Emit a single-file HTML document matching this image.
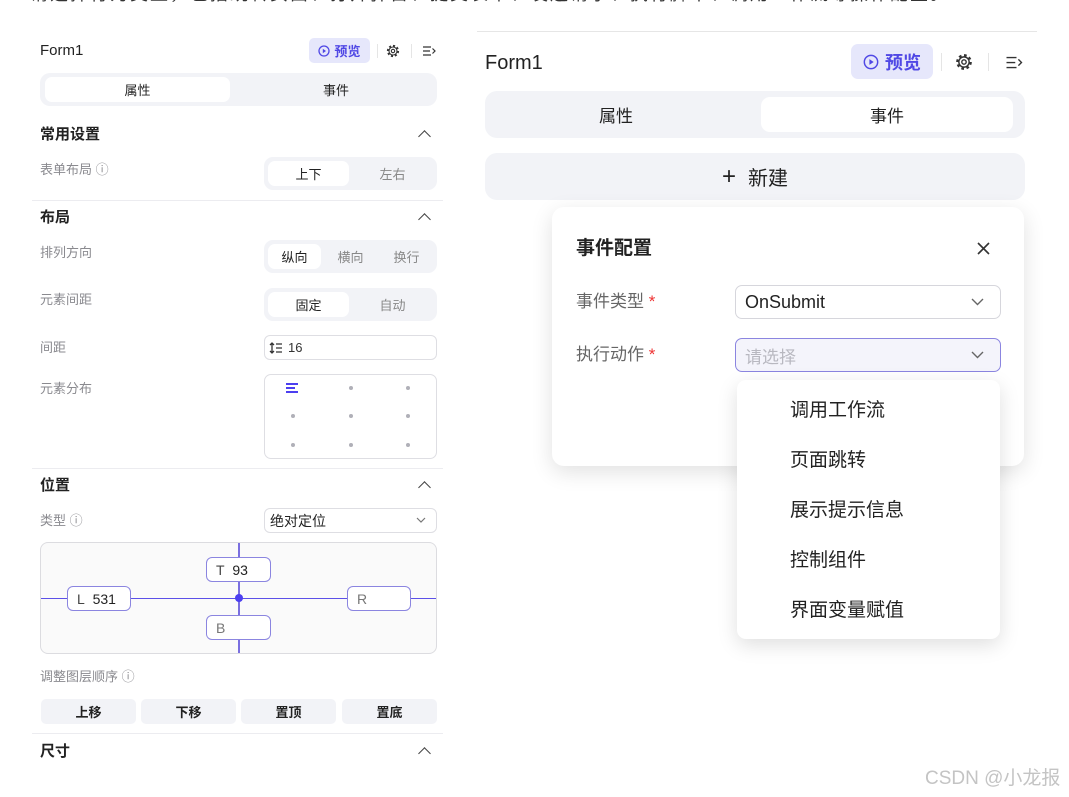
<!DOCTYPE html>
<html><head><meta charset="utf-8"><style>
*{margin:0;padding:0;box-sizing:border-box}
body{width:1069px;height:797px;background:#fff;position:relative;overflow:hidden;font-family:"Liberation Sans","Noto Sans CJK SC",sans-serif;color:#222}
.a{position:absolute}
.t{position:absolute;white-space:nowrap;line-height:1}
.lbl{color:#8a8a8f;font-size:13px}
.h{font-size:15px;font-weight:bold;color:#222}
.seg{position:absolute;background:#f2f3f7;border-radius:9px}
.on{position:absolute;background:#fff;border-radius:7px}
.ct{position:absolute;display:flex;align-items:center;justify-content:center}
.div{position:absolute;height:1px;background:#ececf0}
.chev{position:absolute;width:9px;height:9px;border-left:1.5px solid #444;border-top:1.5px solid #444;transform:rotate(45deg)}
.box{position:absolute;border:1px solid #8b85e0;border-radius:6px;background:#fff;font-size:14px;color:#444;padding-left:9px;display:flex;align-items:center}
.btn{position:absolute;background:#f2f3f7;border-radius:5px;font-size:13px;font-weight:bold;display:flex;align-items:center;justify-content:center;top:699px;height:25px}
.dot{position:absolute;width:4px;height:4px;border-radius:2px;background:#b0b0b8}
.mi{position:absolute;left:790px;font-size:19px;color:#222;white-space:nowrap;line-height:1}
</style></head><body>

<div class="t" style="left:30px;top:-15px;font-size:18px;color:#333;letter-spacing:2px">请选择行为类型，包括跳转页面、打开弹窗、提交表单、发送请求、执行脚本、调用工作流等操作配置。</div>

<!-- LEFT PANEL -->
<div class="t" style="left:40px;top:43px;font-size:15px;color:#222">Form1</div>
<div class="a" style="left:309px;top:38px;width:61px;height:25px;background:#e6e7fb;border-radius:5px;color:#5048e5;font-size:13px;font-weight:bold;display:flex;align-items:center;justify-content:center;gap:4px">
<svg width="12" height="12" viewBox="0 0 12 12"><circle cx="6" cy="6" r="5" fill="none" stroke="#5048e5" stroke-width="1.3"/><path d="M4.8 3.8L8 6L4.8 8.2Z" fill="#5048e5"/></svg>预览</div>
<div class="a" style="left:377px;top:44px;width:1px;height:14px;background:#e5e5e5"></div>
<svg class="a" style="left:386px;top:44px" width="14" height="14" viewBox="0 0 14 14"><circle cx="7" cy="7" r="5" fill="none" stroke="#333" stroke-width="2.2" stroke-dasharray="2 1.9"/><circle cx="7" cy="7" r="4" fill="#fff" stroke="#333" stroke-width="1.1"/><circle cx="7" cy="7" r="1.7" fill="none" stroke="#333" stroke-width="1.1"/></svg>
<div class="a" style="left:411px;top:44px;width:1px;height:14px;background:#e5e5e5"></div>
<svg class="a" style="left:422px;top:45px" width="14" height="12" viewBox="0 0 14 12"><path d="M1 2H9M1 6H8M1 10H9M10.5 3.5L13 6L10.5 8.5" fill="none" stroke="#333" stroke-width="1.2"/></svg>

<div class="seg" style="left:40px;top:73px;width:397px;height:33px;border-radius:10px"></div>
<div class="on" style="left:45px;top:77px;width:185px;height:25px"></div>
<div class="ct" style="left:45px;top:77px;width:185px;height:25px;font-size:13px">属性</div>
<div class="ct" style="left:236px;top:77px;width:200px;height:25px;font-size:13px">事件</div>

<div class="t h" style="left:40px;top:127px">常用设置</div>
<div class="chev" style="left:420px;top:132px"></div>
<div class="t lbl" style="left:40px;top:163px">表单布局 ⓘ</div>
<div class="seg" style="left:264px;top:157px;width:173px;height:33px"></div>
<div class="on" style="left:268px;top:161px;width:81px;height:25px"></div>
<div class="ct" style="left:268px;top:161px;width:81px;height:25px;font-size:13px">上下</div>
<div class="ct" style="left:352px;top:161px;width:81px;height:25px;font-size:13px;color:#888">左右</div>
<div class="div" style="left:32px;top:200px;width:411px"></div>

<div class="t h" style="left:40px;top:210px">布局</div>
<div class="chev" style="left:420px;top:215px"></div>
<div class="t lbl" style="left:40px;top:246px">排列方向</div>
<div class="seg" style="left:264px;top:240px;width:173px;height:33px"></div>
<div class="on" style="left:268px;top:244px;width:53px;height:25px"></div>
<div class="ct" style="left:268px;top:244px;width:53px;height:25px;font-size:13px">纵向</div>
<div class="ct" style="left:324px;top:244px;width:53px;height:25px;font-size:13px;color:#888">横向</div>
<div class="ct" style="left:380px;top:244px;width:53px;height:25px;font-size:13px;color:#888">换行</div>
<div class="t lbl" style="left:40px;top:293px">元素间距</div>
<div class="seg" style="left:264px;top:288px;width:173px;height:33px"></div>
<div class="on" style="left:268px;top:292px;width:81px;height:25px"></div>
<div class="ct" style="left:268px;top:292px;width:81px;height:25px;font-size:13px">固定</div>
<div class="ct" style="left:352px;top:292px;width:81px;height:25px;font-size:13px;color:#888">自动</div>
<div class="t lbl" style="left:40px;top:341px">间距</div>
<div class="a" style="left:264px;top:335px;width:173px;height:25px;border:1px solid #dedee3;border-radius:6px;font-size:13px;color:#333;display:flex;align-items:center;padding-left:4px">
<svg width="16" height="12" viewBox="0 0 16 12" style="margin-right:3px"><path d="M3 1V11M1 3L3 1L5 3M1 9L3 11L5 9M7 2H13M7 6H13M7 10H13" fill="none" stroke="#333" stroke-width="1.3"/></svg>16</div>
<div class="t lbl" style="left:40px;top:382px">元素分布</div>
<div class="a" style="left:264px;top:374px;width:173px;height:85px;border:1px solid #dedee3;border-radius:7px"></div>
<div class="a" style="left:286px;top:383px;width:12px;height:2px;background:#4c3ff0"></div>
<div class="a" style="left:286px;top:387px;width:9px;height:2px;background:#4c3ff0"></div>
<div class="a" style="left:286px;top:391px;width:12px;height:2px;background:#4c3ff0"></div>
<div class="dot" style="left:349px;top:386px"></div><div class="dot" style="left:406px;top:386px"></div>
<div class="dot" style="left:291px;top:414px"></div><div class="dot" style="left:349px;top:414px"></div><div class="dot" style="left:406px;top:414px"></div>
<div class="dot" style="left:291px;top:443px"></div><div class="dot" style="left:349px;top:443px"></div><div class="dot" style="left:406px;top:443px"></div>
<div class="div" style="left:32px;top:468px;width:411px"></div>

<div class="t h" style="left:40px;top:478px">位置</div>
<div class="chev" style="left:420px;top:483px"></div>
<div class="t lbl" style="left:40px;top:514px">类型 ⓘ</div>
<div class="a" style="left:264px;top:508px;width:173px;height:25px;border:1px solid #dedee3;border-radius:6px;font-size:14px;color:#222;display:flex;align-items:center;padding-left:5px">绝对定位</div>
<svg class="a" style="left:416px;top:517px" width="10" height="7" viewBox="0 0 10 7"><path d="M1 1L5 5L9 1" fill="none" stroke="#777" stroke-width="1.2"/></svg>

<div class="a" style="left:40px;top:542px;width:397px;height:112px;background:#fafafa;border:1px solid #dcdce0;border-radius:8px"></div>
<div class="a" style="left:238px;top:543px;width:1.5px;height:110px;background:#7a6fe0"></div>
<div class="a" style="left:41px;top:597.5px;width:395px;height:1.5px;background:#5c50e8"></div>
<div class="a" style="left:235px;top:594px;width:8px;height:8px;border-radius:4px;background:#4c3ff0"></div>
<div class="box" style="left:206px;top:557px;width:65px;height:25px">T&nbsp;&nbsp;<span style="color:#222">93</span></div>
<div class="box" style="left:67px;top:586px;width:64px;height:25px">L&nbsp;&nbsp;<span style="color:#222">531</span></div>
<div class="box" style="left:347px;top:586px;width:64px;height:25px;color:#777">R</div>
<div class="box" style="left:206px;top:615px;width:65px;height:25px;color:#777">B</div>

<div class="t lbl" style="left:40px;top:670px">调整图层顺序 ⓘ</div>
<div class="btn" style="left:41px;width:95px">上移</div>
<div class="btn" style="left:141px;width:95px">下移</div>
<div class="btn" style="left:241px;width:95px">置顶</div>
<div class="btn" style="left:342px;width:95px">置底</div>
<div class="div" style="left:32px;top:733px;width:411px"></div>
<div class="t h" style="left:40px;top:744px">尺寸</div>
<div class="chev" style="left:420px;top:749px"></div>

<!-- RIGHT PANEL -->
<div class="a" style="left:477px;top:31px;width:560px;height:1px;background:#e6e6e6"></div>
<div class="t" style="left:485px;top:53px;font-size:20px;color:#222">Form1</div>
<div class="a" style="left:851px;top:44px;width:82px;height:35px;background:#e6e7fb;border-radius:7px;color:#5048e5;font-size:18px;font-weight:bold;display:flex;align-items:center;justify-content:center;gap:6px">
<svg width="16" height="16" viewBox="0 0 12 12"><circle cx="6" cy="6" r="5" fill="none" stroke="#5048e5" stroke-width="1.1"/><path d="M4.8 3.8L8 6L4.8 8.2Z" fill="#5048e5"/></svg>预览</div>
<div class="a" style="left:941px;top:53px;width:1px;height:18px;background:#e5e5e5"></div>
<svg class="a" style="left:955px;top:53px" width="18" height="18" viewBox="0 0 14 14"><circle cx="7" cy="7" r="5" fill="none" stroke="#333" stroke-width="2.2" stroke-dasharray="2 1.9"/><circle cx="7" cy="7" r="4" fill="#fff" stroke="#333" stroke-width="1.1"/><circle cx="7" cy="7" r="1.7" fill="none" stroke="#333" stroke-width="1.1"/></svg>
<div class="a" style="left:988px;top:53px;width:1px;height:18px;background:#e5e5e5"></div>
<svg class="a" style="left:1005px;top:55px" width="18" height="15" viewBox="0 0 14 12"><path d="M1 2H9M1 6H8M1 10H9M10.5 3.5L13 6L10.5 8.5" fill="none" stroke="#333" stroke-width="1.1"/></svg>

<div class="seg" style="left:485px;top:91px;width:540px;height:47px;border-radius:12px"></div>
<div class="on" style="left:761px;top:97px;width:252px;height:35px;border-radius:9px"></div>
<div class="ct" style="left:490px;top:97px;width:252px;height:35px;font-size:17px">属性</div>
<div class="ct" style="left:761px;top:97px;width:252px;height:35px;font-size:17px">事件</div>

<div class="seg" style="left:485px;top:153px;width:540px;height:47px;border-radius:12px"></div>
<div class="ct" style="left:485px;top:153px;width:540px;height:47px;font-size:20px;color:#222"><span style="font-size:24px;margin-right:12px;font-weight:300">+</span>新建</div>

<div class="a" style="left:552px;top:207px;width:472px;height:259px;background:#fff;border-radius:12px;box-shadow:0 6px 22px rgba(0,0,0,.12)"></div>
<div class="t" style="left:576px;top:239px;font-size:19px;font-weight:bold">事件配置</div>
<svg class="a" style="left:977px;top:242px" width="13" height="13" viewBox="0 0 13 13"><path d="M1 1L12 12M12 1L1 12" stroke="#333" stroke-width="1.6"/></svg>
<div class="t" style="left:576px;top:293px;font-size:17px;color:#666">事件类型 <span style="color:#e33">*</span></div>
<div class="a" style="left:735px;top:285px;width:266px;height:34px;border:1px solid #d6d6dc;border-radius:7px;font-size:18px;color:#222;display:flex;align-items:center;padding-left:9px">OnSubmit</div>
<svg class="a" style="left:971px;top:298px" width="13" height="8" viewBox="0 0 13 8"><path d="M1 1L6.5 6.5L12 1" fill="none" stroke="#666" stroke-width="1.4"/></svg>
<div class="t" style="left:576px;top:346px;font-size:17px;color:#666">执行动作 <span style="color:#e33">*</span></div>
<div class="a" style="left:735px;top:338px;width:266px;height:34px;border:1.5px solid #8b85e0;background:#f4f4fb;border-radius:7px;font-size:17px;color:#b8b8c0;display:flex;align-items:center;padding-left:9px">请选择</div>
<svg class="a" style="left:971px;top:351px" width="13" height="8" viewBox="0 0 13 8"><path d="M1 1L6.5 6.5L12 1" fill="none" stroke="#666" stroke-width="1.4"/></svg>

<div class="a" style="left:737px;top:380px;width:263px;height:259px;background:#fff;border-radius:9px;box-shadow:0 6px 20px rgba(0,0,0,.13)"></div>
<div class="mi" style="top:401px">调用工作流</div>
<div class="mi" style="top:451px">页面跳转</div>
<div class="mi" style="top:501px">展示提示信息</div>
<div class="mi" style="top:551px">控制组件</div>
<div class="mi" style="top:601px">界面变量赋值</div>

<div class="t" style="left:925px;top:769px;font-size:19px;color:#c4c4c4">CSDN @小龙报</div>
</body></html>
